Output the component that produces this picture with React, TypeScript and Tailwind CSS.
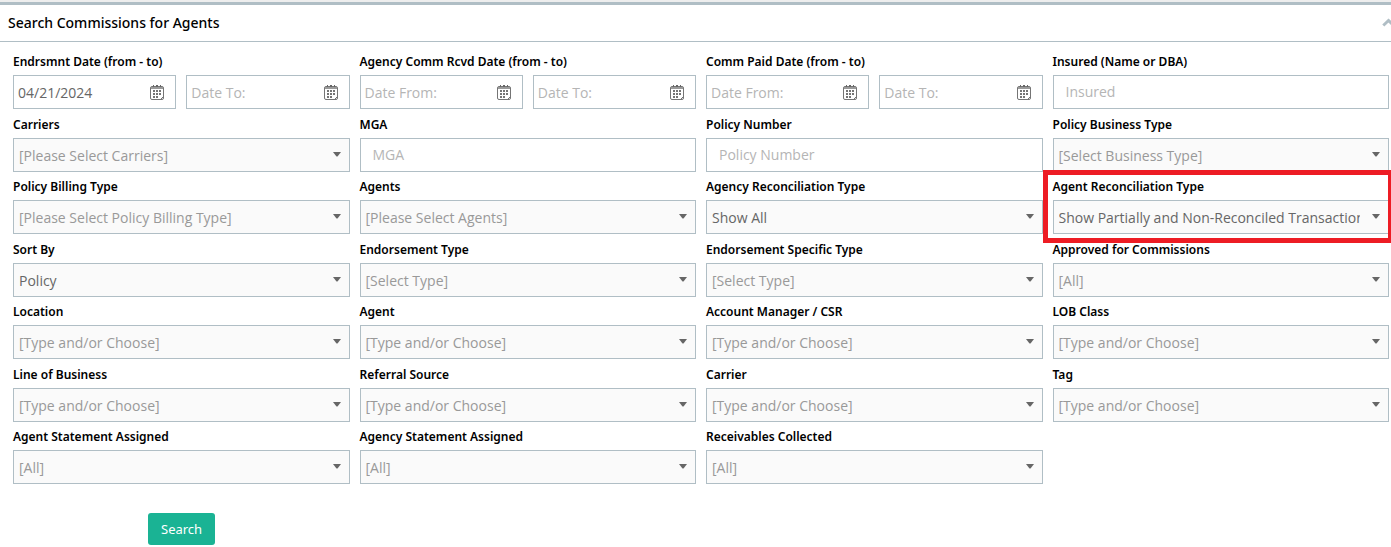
import { useId } from "react";
import type { ReactNode } from "react";

type SelectSpec = { label: string; value: string; chosen?: boolean; highlighted?: boolean };

const LABEL = "h-[18px] text-xs leading-[18px] font-semibold text-black whitespace-nowrap";
const BOX = "w-full h-[34px] border border-[#b0bec5] outline-none font-['Open_Sans',sans-serif] text-sm";

function CalendarIcon() {
  return (
    <svg width="14" height="15" viewBox="0 0 14 15" fill="none" aria-hidden="true">
      <path d="M2 1.5h10a1.500 1.500 0 0 1 1.500 1.500v8.500l-3 3H2a1.500 1.500 0 0 1-1.500-1.500V3A1.500 1.500 0 0 1 2 1.500z" stroke="#757575" />
      <path d="M10 14.500h2a1.500 1.500 0 0 0 1.500-1.500v-2.500" stroke="#757575" />
      <path d="M1 2h12v2H1z" fill="#9a9a9a" />
      <path d="M3 0h1v2H3zM6 0h2v2H6zM10 0h1v2h-1z" fill="#666" />
      <path
        d="M3 5h2v2H3zM6 5h2v2H6zM9 5h2v2H9zM3 8h2v2H3zM6 8h2v2H6zM9 8h2v2H9zM3 11h2v2H3zM6 11h2v2H6z"
        fill="#757575"
      />
    </svg>
  );
}

function Cell({ children }: { children: ReactNode }) {
  return <div className="relative min-w-0">{children}</div>;
}

function DateInput({ id, name, placeholder, value }: { id: string; name: string; placeholder: string; value?: string }) {
  return (
    <div className="relative min-w-0 flex-1">
      <input
        id={id}
        type="text"
        aria-label={name}
        defaultValue={value}
        placeholder={placeholder}
        className={`${BOX} bg-white pl-1 pr-8 text-[#666] placeholder:text-[#b5b5b5]`}
      />
      <button type="button" aria-label={`Open calendar for ${name}`} className="absolute right-3 top-2.5">
        <CalendarIcon />
      </button>
    </div>
  );
}

function DateRange({ label, from }: { label: string; from?: string }) {
  const id = useId();
  return (
    <Cell>
      <label htmlFor={id} className={`${LABEL} block mb-1`}>{label}</label>
      <div className="flex gap-2.5">
        <DateInput id={id} name={`${label}, from`} placeholder="Date From:" value={from} />
        <DateInput id={`${id}-to`} name={`${label}, to`} placeholder="Date To:" />
      </div>
    </Cell>
  );
}

function TextField({ label, placeholder }: { label: string; placeholder: string }) {
  const id = useId();
  return (
    <Cell>
      <label htmlFor={id} className={`${LABEL} block mb-1`}>{label}</label>
      <input
        id={id}
        type="text"
        placeholder={placeholder}
        className={`${BOX} block bg-white px-3 pb-px text-[#666] placeholder:text-[#b5b5b5]`}
      />
    </Cell>
  );
}

function SelectField({ label, value, chosen, highlighted }: SelectSpec) {
  const id = useId();
  return (
    <Cell>
      <label htmlFor={id} className={`${LABEL} block mb-1`}>{label}</label>
      <div className="relative">
        <select
          id={id}
          className={`${BOX} block appearance-none bg-[#fafafa] pt-0.5 pl-[5px] pr-7 ${chosen ? "text-[#666]" : "text-[#999]"}`}
        >
          <option>{value}</option>
        </select>
        <svg
          width="8"
          height="5"
          viewBox="0 0 8 5"
          className="pointer-events-none absolute right-[9px] top-3.5"
          aria-hidden="true"
        >
          <path d="M0 0h8L4.500 4.500h-1z" fill="#666" />
        </svg>
      </div>
      {highlighted && (
        <div className="pointer-events-none absolute -top-2 -left-2.5 -right-1 h-[73px] border-5 border-[#ed1c24]" />
      )}
    </Cell>
  );
}

const SELECTS: SelectSpec[] = [
  { label: "Policy Business Type", value: "[Select Business Type]" },
  { label: "Policy Billing Type", value: "[Please Select Policy Billing Type]" },
  { label: "Agents", value: "[Please Select Agents]" },
  { label: "Agency Reconciliation Type", value: "Show All", chosen: true },
  {
    label: "Agent Reconciliation Type",
    value: "Show Partially and Non-Reconciled Transactions",
    chosen: true,
    highlighted: true,
  },
  { label: "Sort By", value: "Policy", chosen: true },
  { label: "Endorsement Type", value: "[Select Type]" },
  { label: "Endorsement Specific Type", value: "[Select Type]" },
  { label: "Approved for Commissions", value: "[All]" },
  { label: "Location", value: "[Type and/or Choose]" },
  { label: "Agent", value: "[Type and/or Choose]" },
  { label: "Account Manager / CSR", value: "[Type and/or Choose]" },
  { label: "LOB Class", value: "[Type and/or Choose]" },
  { label: "Line of Business", value: "[Type and/or Choose]" },
  { label: "Referral Source", value: "[Type and/or Choose]" },
  { label: "Carrier", value: "[Type and/or Choose]" },
  { label: "Tag", value: "[Type and/or Choose]" },
  { label: "Agent Statement Assigned", value: "[All]" },
  { label: "Agency Statement Assigned", value: "[All]" },
  { label: "Receivables Collected", value: "[All]" },
];

export default function App() {
  return (
    <main className="overflow-hidden border-t-2 border-[#eeeeee] bg-white font-['Noto_Sans',sans-serif]">
      <header className="flex h-10 items-center justify-between border-t-3 border-b border-[#b0bec5] pl-2">
        <h1 className="text-sm font-medium text-black">Search Commissions for Agents</h1>
        <button type="button" aria-label="Collapse" className="-mr-1 shrink-0">
          <svg width="13" height="10" viewBox="0 0 13 10" fill="none" aria-hidden="true">
            <path d="M1.300 7.500L6.500 2.500l5.200 5" stroke="#b0bec5" strokeWidth="3" />
          </svg>
        </button>
      </header>
      <form onSubmit={(event) => event.preventDefault()}>
        <div className="mt-[11px] grid min-h-[438px] auto-rows-fr grid-cols-4 gap-x-2.5 pl-[13px] pr-0.5">
          <DateRange label="Endrsmnt Date (from - to)" from="04/21/2024" />
          <DateRange label="Agency Comm Rcvd Date (from - to)" />
          <DateRange label="Comm Paid Date (from - to)" />
          <TextField label="Insured (Name or DBA)" placeholder="Insured" />
          <SelectField label="Carriers" value="[Please Select Carriers]" />
          <TextField label="MGA" placeholder="MGA" />
          <TextField label="Policy Number" placeholder="Policy Number" />
          {SELECTS.map((spec) => (
            <SelectField key={spec.label} {...spec} />
          ))}
        </div>
        <button
          type="submit"
          className="mt-[22px] mb-0.5 ml-[148px] block h-8 rounded-[3px] bg-[#1ab394] px-[13px] pt-0.5 text-[13px] text-white"
        >
          Search
        </button>
      </form>
    </main>
  );
}
